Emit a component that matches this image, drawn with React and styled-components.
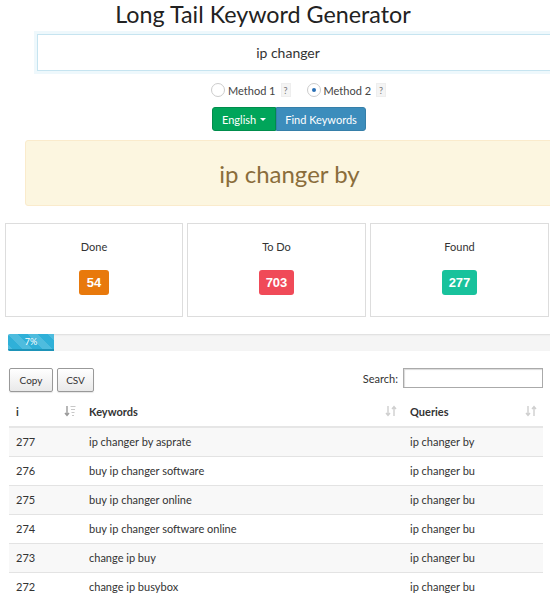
import React from "react";
import styled, { createGlobalStyle } from "styled-components";

const GlobalStyle = createGlobalStyle`
  html, body {
    margin: 0;
    padding: 0;
    background: #fff;
    overflow: hidden;
  }
  body {
    font-family: Lato, "Open Sans", sans-serif;
    color: #333;
  }
  * { box-sizing: border-box; }
`;

const rows = [
  [277, "ip changer by asprate", "ip changer by"],
  [276, "buy ip changer software", "ip changer bu"],
  [275, "buy ip changer online", "ip changer bu"],
  [274, "buy ip changer software online", "ip changer bu"],
  [273, "change ip buy", "ip changer bu"],
  [272, "change ip busybox", "ip changer bu"],
];

const stats = [
  { label: "Done", value: 54, color: "#e8790c", width: 178 },
  { label: "To Do", value: 703, color: "#f04a58", width: 179 },
  { label: "Found", value: 277, color: "#18c29c", width: 179 },
];

const Page = styled.div`
  width: 600px;
  padding-bottom: 20px;
`;

const Title = styled.h1`
  margin: 0;
  width: 526px;
  text-align: center;
  font-weight: 400;
  font-size: 23.3px;
  line-height: 28px;
  color: #222;
`;

const Query = styled.input`
  display: block;
  margin: 6px 0 0 37px;
  width: 540px;
  height: 37px;
  border: 1px solid #c6e4f0;
  box-shadow: 0 0 0 3px #eef8fc;
  outline: none;
  text-align: center;
  padding: 0 38px 0 0;
  font-family: inherit;
  font-size: 14px;
  color: #333;
`;

const Methods = styled.div`
  display: flex;
  align-items: center;
  margin: 10px 0 0 211px;
  height: 18px;
  font-size: 11px;
  color: #444;
`;

const Method = styled.label`
  display: flex;
  align-items: center;
  margin-right: ${(p) => p.$gap || 0}px;
`;

const Radio = styled.span`
  width: 14px;
  height: 14px;
  border-radius: 50%;
  border: 1px solid #ccc;
  background: #fff;
  margin-right: 3px;
  display: flex;
  align-items: center;
  justify-content: center;
  &::after {
    content: "";
    width: 4px;
    height: 4px;
    border-radius: 50%;
    background: ${(p) => (p.$checked ? "#2a6fb5" : "transparent")};
  }
`;

const Help = styled.span`
  display: inline-block;
  margin-left: 5px;
  padding: 0 2px;
  height: 14px;
  line-height: 14px;
  font-size: 9px;
  color: #777;
  background: #f4f4f4;
  border: 1px solid #eee;
`;

const ButtonGroup = styled.div`
  display: flex;
  margin: 8px 0 0 212px;
`;

const Btn = styled.button`
  height: 24px;
  border: 1px solid ${(p) => p.$border};
  background: ${(p) => p.$bg};
  color: #fff;
  font-family: inherit;
  font-size: 11px;
  padding: 0 ${(p) => p.$pad}px;
  display: flex;
  align-items: center;
  gap: 4px;
  border-radius: ${(p) => p.$radius};
`;

const Caret = styled.span`
  width: 0;
  height: 0;
  border-left: 3px solid transparent;
  border-right: 3px solid transparent;
  border-top: 3px solid #fff;
`;

const Alert = styled.div`
  margin: 9px 0 0 25px;
  width: 530px;
  height: 66px;
  background: #fcf6e0;
  border: 1px solid #faebcc;
  border-radius: 3px;
  color: #8a6d3b;
  font-size: 24px;
  display: flex;
  align-items: center;
  justify-content: center;
  padding-right: 1px;
`;

const StatRow = styled.div`
  display: flex;
  gap: 4px;
  margin: 17px 0 0 5px;
`;

const StatBox = styled.div`
  width: ${(p) => p.$w}px;
  height: 94px;
  border: 1px solid #ddd;
  background: #fff;
  display: flex;
  flex-direction: column;
  align-items: center;
  padding-top: 16px;
`;

const StatLabel = styled.div`
  font-size: 11px;
  color: #333;
  line-height: 14px;
`;

const Badge = styled.span`
  margin-top: 16px;
  min-width: 30px;
  height: 25px;
  padding: 0 7px;
  border-radius: 3px;
  background: ${(p) => p.$color};
  color: #fff;
  font-family: "Liberation Sans", Arial, sans-serif;
  font-weight: 700;
  font-size: 13px;
  display: flex;
  align-items: center;
  justify-content: center;
`;

const Progress = styled.div`
  margin: 17px 0 0 8px;
  width: 560px;
  height: 17px;
  background: #f5f5f5;
  border-radius: 2px;
  box-shadow: inset 0 1px 2px rgba(0, 0, 0, 0.1);
  overflow: hidden;
`;

const ProgressFill = styled.div`
  height: 100%;
  background-color: #2fb0d8;
  background-image: linear-gradient(
    45deg,
    rgba(255, 255, 255, 0.15) 25%,
    transparent 25%,
    transparent 50%,
    rgba(255, 255, 255, 0.15) 50%,
    rgba(255, 255, 255, 0.15) 75%,
    transparent 75%,
    transparent
  );
  background-size: 20px 20px;
  border-bottom: 2px solid #1d93b8;
  color: #fff;
  font-size: 9px;
  line-height: 15px;
  text-align: center;
`;

const Toolbar = styled.div`
  display: flex;
  justify-content: space-between;
  align-items: flex-start;
  margin: 17px 0 0 9px;
  width: 534px;
`;

const Tools = styled.div`
  display: flex;
  gap: 4px;
`;

const ToolBtn = styled.button`
  height: 24px;
  width: ${(p) => p.$w}px;
  border: 1px solid #999;
  border-radius: 2px;
  background: linear-gradient(to bottom, #fff 0%, #e9e9e9 100%);
  box-shadow: 0 1px 1px rgba(0, 0, 0, 0.1);
  font-family: inherit;
  font-size: 10px;
  color: #333;
  padding: 0;
`;

const SearchLabel = styled.label`
  display: flex;
  align-items: center;
  gap: 5px;
  font-size: 11px;
  color: #333;
`;

const SearchBox = styled.input`
  width: 140px;
  height: 20px;
  border: 1px solid #aaa;
  box-shadow: inset 1px 1px 1px rgba(0, 0, 0, 0.15);
  outline: none;
`;

const Table = styled.table`
  margin: 5px 0 0 9px;
  width: 534px;
  border-collapse: collapse;
  font-size: 11px;
  table-layout: fixed;
`;

const Th = styled.th`
  text-align: left;
  font-weight: 700;
  height: 30px;
  padding: 0 0 0 7px;
  border-bottom: 2px solid #e6e6e6;
  position: relative;
  color: #333;
`;

const SortIcon = styled.svg`
  position: absolute;
  right: 6px;
  top: 8px;
`;

const Tr = styled.tr`
  background: ${(p) => (p.$odd ? "#f8f8f8" : "#fff")};
`;

const Td = styled.td`
  height: 29px;
  padding: 0 0 0 7px;
  border-top: 1px solid #e3e3e3;
  color: #333;
  white-space: nowrap;
  overflow: hidden;
`;

const SortBoth = () => (
  <SortIcon width="12" height="12" viewBox="0 0 12 12">
    <g stroke="#cfcfcf" strokeWidth="1.4" fill="none">
      <path d="M3 1v9M1 8l2 2.5L5 8" />
      <path d="M9 11V2M7 4l2-2.5L11 4" />
    </g>
  </SortIcon>
);

const SortDesc = () => (
  <SortIcon width="12" height="12" viewBox="0 0 12 12">
    <g stroke="#9a9a9a" strokeWidth="1.4" fill="none">
      <path d="M3 1v9M1 8l2 2.5L5 8" />
    </g>
    <g stroke="#c8c8c8" strokeWidth="1.2">
      <path d="M6.5 1.5h5M7 4.5h4M7.5 7.5h3M8 10.5h2" />
    </g>
  </SortIcon>
);

export default function App() {
  return (
    <Page>
      <GlobalStyle />
      <Title>Long Tail Keyword Generator</Title>
      <Query defaultValue="ip changer" />
      <Methods>
        <Method $gap={16}>
          <Radio />
          Method 1<Help>?</Help>
        </Method>
        <Method>
          <Radio $checked />
          Method 2<Help>?</Help>
        </Method>
      </Methods>
      <ButtonGroup>
        <Btn $bg="#00a55a" $border="#008d4c" $pad={9} $radius="3px 0 0 3px">
          English <Caret />
        </Btn>
        <Btn $bg="#3c8dbc" $border="#367fa9" $pad={8} $radius="0 3px 3px 0">
          Find Keywords
        </Btn>
      </ButtonGroup>
      <Alert>ip changer by</Alert>
      <StatRow>
        {stats.map((s) => (
          <StatBox key={s.label} $w={s.width}>
            <StatLabel>{s.label}</StatLabel>
            <Badge $color={s.color}>{s.value}</Badge>
          </StatBox>
        ))}
      </StatRow>
      <Progress>
        <ProgressFill style={{ width: "46px" }}>7%</ProgressFill>
      </Progress>
      <Toolbar>
        <Tools>
          <ToolBtn $w={44}>Copy</ToolBtn>
          <ToolBtn $w={37}>CSV</ToolBtn>
        </Tools>
        <SearchLabel>
          Search:
          <SearchBox />
        </SearchLabel>
      </Toolbar>
      <Table>
        <colgroup>
          <col style={{ width: "73px" }} />
          <col style={{ width: "321px" }} />
          <col style={{ width: "140px" }} />
        </colgroup>
        <thead>
          <tr>
            <Th>
              i<SortDesc />
            </Th>
            <Th>
              Keywords
              <SortBoth />
            </Th>
            <Th>
              Queries
              <SortBoth />
            </Th>
          </tr>
        </thead>
        <tbody>
          {rows.map((r, i) => (
            <Tr key={r[0]} $odd={i % 2 === 0}>
              <Td>{r[0]}</Td>
              <Td>{r[1]}</Td>
              <Td>{r[2]}</Td>
            </Tr>
          ))}
        </tbody>
      </Table>
    </Page>
  );
}
